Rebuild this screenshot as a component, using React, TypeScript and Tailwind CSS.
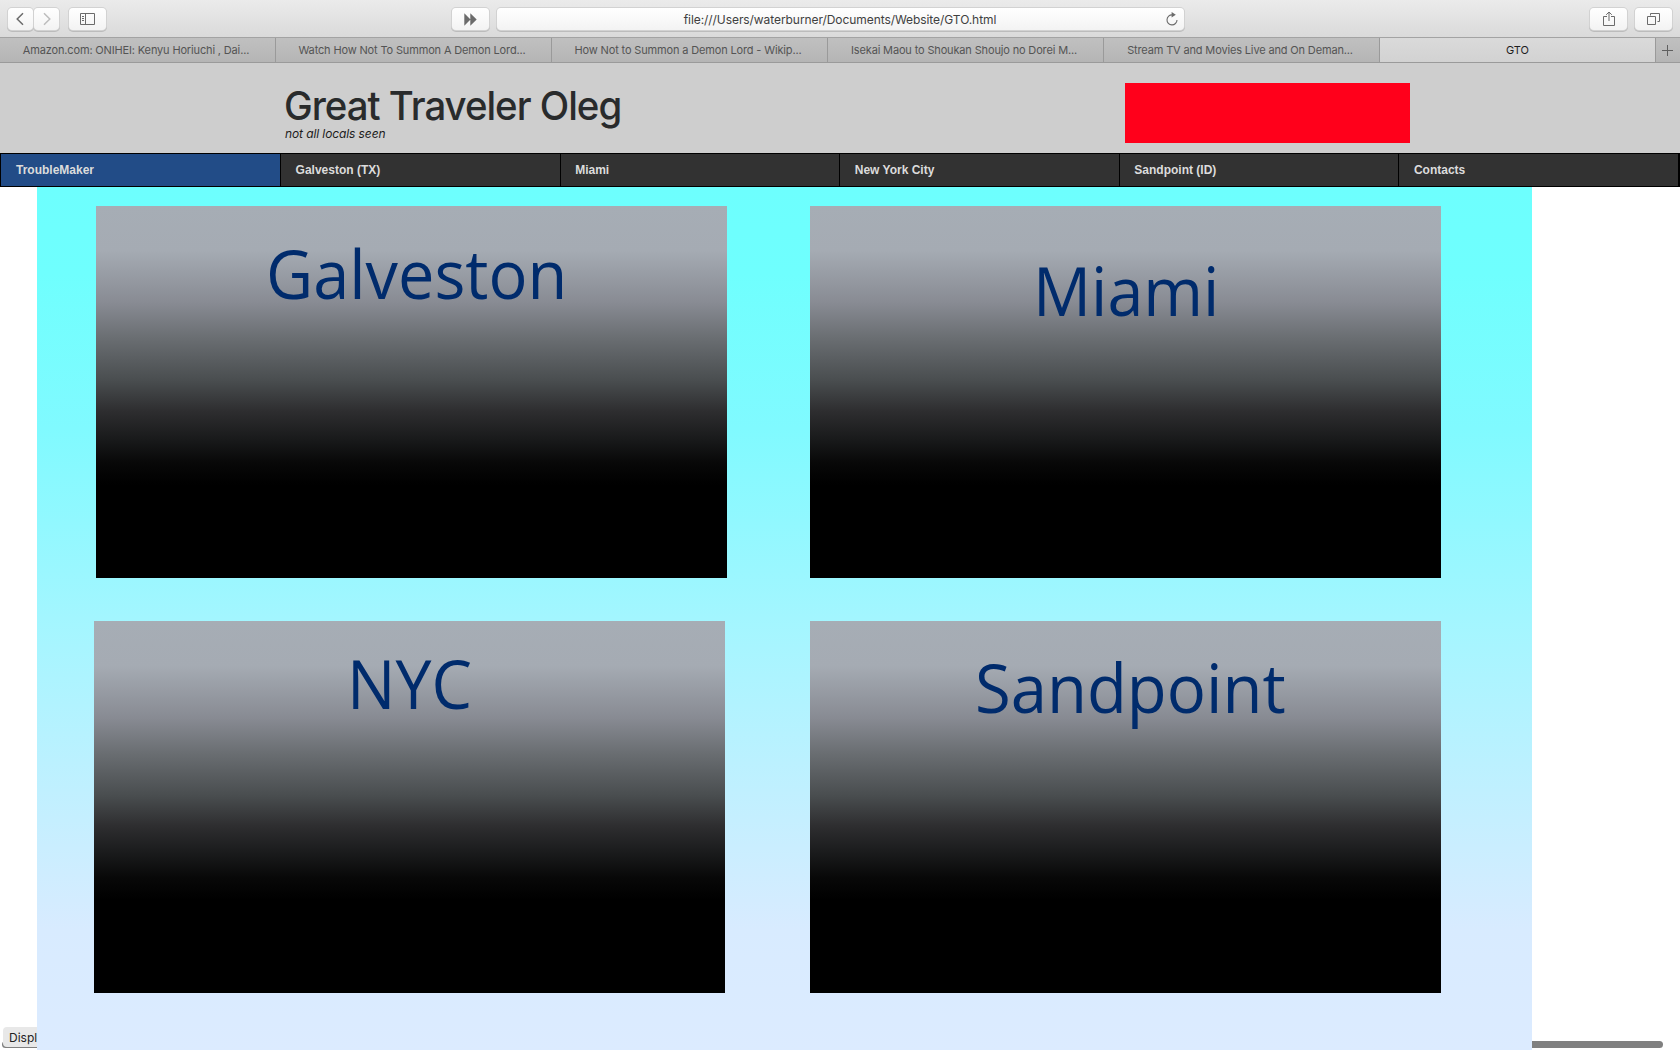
import type { ReactNode } from "react";

const TABS = [
  "Amazon.com: ONIHEI: Kenyu Horiuchi , Dai...",
  "Watch How Not To Summon A Demon Lord...",
  "How Not to Summon a Demon Lord - Wikip...",
  "Isekai Maou to Shoukan Shoujo no Dorei M...",
  "Stream TV and Movies Live and On Deman...",
  "GTO",
];

const NAV = ["TroubleMaker", "Galveston (TX)", "Miami", "New York City", "Sandpoint (ID)", "Contacts"];

function ToolButton({ className, children }: { className: string; children: ReactNode }) {
  return (
    <button
      className={`flex h-[22px] items-center justify-center rounded-[4px] bg-gradient-to-b from-white to-[#f3f3f3] text-[#6b6b6b] shadow-[0_0_0_1px_#d2d2d2,0_1px_0_1px_#bcbcbc] ${className}`}
    >
      {children}
    </button>
  );
}

function Toolbar() {
  return (
    <div className="flex h-[38px] items-start border-b border-[#a3a3a3] bg-gradient-to-b from-[#ebebeb] to-[#dadada] pt-2">
      <ToolButton className="ml-2 w-[25px] pr-px">
        <svg width="10" height="14" viewBox="0 0 10 14" fill="none" stroke="currentColor" strokeWidth="1.5">
          <path d="M8 1.2 2.2 7 8 12.8" />
        </svg>
      </ToolButton>
      <ToolButton className="ml-px w-[25px] text-[#bdbdbd]">
        <svg width="10" height="14" viewBox="0 0 10 14" fill="none" stroke="#bdbdbd" strokeWidth="1.5">
          <path d="M2 1.2 7.8 7 2 12.8" />
        </svg>
      </ToolButton>
      <ToolButton className="ml-[10px] w-[37px]">
        <svg width="15" height="12" viewBox="0 0 15 12" fill="none" stroke="currentColor">
          <path d="M.5.5h14v11H.5zM5.5.5v11M2 3.5h2M2 5.5h2M2 7.5h2" />
        </svg>
      </ToolButton>
      <ToolButton className="ml-[346px] w-[37px]">
        <svg width="13" height="13" viewBox="0 0 13 13" fill="currentColor" className="mt-px">
          <path d="M.3.2 6.5 6.5.3 12.8zM6.3.2l6.4 6.3-6.4 6.3z" />
        </svg>
      </ToolButton>
      <div className="ml-2 flex h-[22px] w-[687px] items-center rounded-[4px] bg-gradient-to-b from-white to-[#f3f3f3] shadow-[0_0_0_1px_#d2d2d2,0_1px_0_1px_#bcbcbc]">
        <span className="mt-px grow pl-[17px] text-center text-[12px] tracking-[-0.07px] text-[#404040]">
          file:///Users/waterburner/Documents/Website/GTO.html
        </span>
        <svg width="12" height="14" viewBox="0 0 12 14" fill="none" stroke="#6b6b6b" strokeWidth="1.1" className="mr-[6px]">
          <path d="M6.3 2.9A5 5 0 1 0 11 8" />
          <path d="M5.6 0v5.6L9.8 2.8z" fill="#6b6b6b" stroke="none" />
        </svg>
      </div>
      <ToolButton className="ml-[406px] w-[37px]">
        <svg width="12" height="16" viewBox="0 0 12 16" fill="none" stroke="currentColor" className="-mt-px">
          <path d="M4 5.5H.5v9h11v-9H8M6 10V1M3.2 3.8 6 1l2.8 2.8" />
        </svg>
      </ToolButton>
      <ToolButton className="ml-2 w-[37px]">
        <svg width="13" height="12" viewBox="0 0 13 12" fill="none" stroke="currentColor">
          <path d="M.5 3.5h8v8h-8zM3.5 2.5v-2h9v8h-2" />
        </svg>
      </ToolButton>
    </div>
  );
}

function TabStrip() {
  return (
    <div className="flex h-[25px] border-b border-[#9a9a9a] bg-gradient-to-b from-[#c0c0c0] to-[#b5b5b5]">
      {TABS.map((tab, i) => (
        <div
          key={tab}
          className={`flex w-[276px] items-center justify-center border-r border-[#9a9a9a] pt-px text-[11px] whitespace-nowrap ${
            i === TABS.length - 1
              ? "bg-gradient-to-b from-[#dadada] to-[#d2d2d2] text-[#1e1e1e]"
              : "pr-[3px] tracking-[-0.15px] text-[#545454]"
          }`}
        >
          {tab}
        </div>
      ))}
      <div className="flex grow items-center justify-center pr-[2px]">
        <svg width="11" height="11" viewBox="0 0 11 11" stroke="#5f5f5f">
          <path d="M5.5 0v11M0 5.5h11" />
        </svg>
      </div>
    </div>
  );
}

function SiteHeader() {
  return (
    <header className="flex h-[90px] items-start justify-between bg-[#cecece] pr-[270px] pl-[285px]">
      <div className="pt-[23px]">
        <h1 className="-ml-px origin-left scale-x-96 text-[40px] leading-10 font-medium tracking-[-1.05px] whitespace-nowrap text-[#292b2c]">
          Great Traveler Oleg
        </h1>
        <p className="text-[12px] leading-4 tracking-[-0.1px] text-[#1c1c1c] italic">not all locals seen</p>
      </div>
      <div className="mt-5 h-[60px] w-[285px] bg-[#ff001b]" />
    </header>
  );
}

function SiteNav() {
  return (
    <nav className="flex h-[34px] border-y border-l border-r-2 border-y-black border-r-black border-l-black bg-[#323232] font-['Liberation_Sans',sans-serif]">
      {NAV.map((item, i) => (
        <a
          key={item}
          className={`flex flex-1 items-center text-[12px] font-bold text-[#dcdcdc] ${
            i === 0 ? "bg-[#224c87] pl-[15px]" : "pl-[14.5px]"
          } ${i < NAV.length - 1 ? "border-r border-black" : ""}`}
        >
          {item}
        </a>
      ))}
    </nav>
  );
}

function CityCard({ name, className, scale }: { name: string; className: string; scale: string }) {
  return (
    <div
      className={`h-[372px] w-[631px] shrink-0 bg-[linear-gradient(to_bottom,#a6adb5_0%,#a5abb3_12%,#888b93_26%,#6a6e72_35.5%,#494d4f_47%,#2e2e30_55%,#18191a_63%,#080808_69%,#000_75%)] ${className}`}
    >
      <h2
        className={`origin-left font-['Open_Sans',sans-serif] text-[67.5px] leading-[93px] font-normal whitespace-nowrap text-[#002b6c] ${scale}`}
      >
        {name}
      </h2>
    </div>
  );
}

export default function App() {
  return (
    <div className="relative flex h-[1050px] w-[1680px] flex-col overflow-hidden bg-white font-['Inter',sans-serif]">
      <Toolbar />
      <TabStrip />
      <SiteHeader />
      <SiteNav />

      {/* Horizontal scrollbar and link status bubble, both partly hidden by the page body */}
      <div className="absolute bottom-[2px] left-[2px] h-[7px] w-[1661px] rounded-full bg-[#808080]" />
      <div className="absolute bottom-[3px] left-[3px] h-5 w-24 rounded-[4px] bg-[#e8e8e8] pl-[6px] text-[12px] leading-[21px] text-[#222]">
        Displ
      </div>

      <main className="relative ml-[37px] flex w-[1495px] grow flex-col gap-[43px] bg-[linear-gradient(to_bottom,#6dfffe_0%,#6ffffe_10%,#80faff_28%,#a3f6ff_50%,#c0f0ff_70%,#d8ebff_86%,#dcebff_100%)] pt-[19px]">
        <div className="flex gap-[83px] pl-[59px]">
          <CityCard name="Galveston" className="pt-[21px] pl-[170px]" scale="scale-x-[0.961]" />
          <CityCard name="Miami" className="pt-[38px] pl-[223.3px]" scale="scale-x-[0.957]" />
        </div>
        <div className="flex gap-[85px] pl-[57px]">
          <CityCard name="NYC" className="pt-4 pl-[253.4px]" scale="scale-x-[0.953]" />
          <CityCard name="Sandpoint" className="pt-5 pl-[165.3px]" scale="scale-x-[0.966]" />
        </div>
      </main>
    </div>
  );
}
